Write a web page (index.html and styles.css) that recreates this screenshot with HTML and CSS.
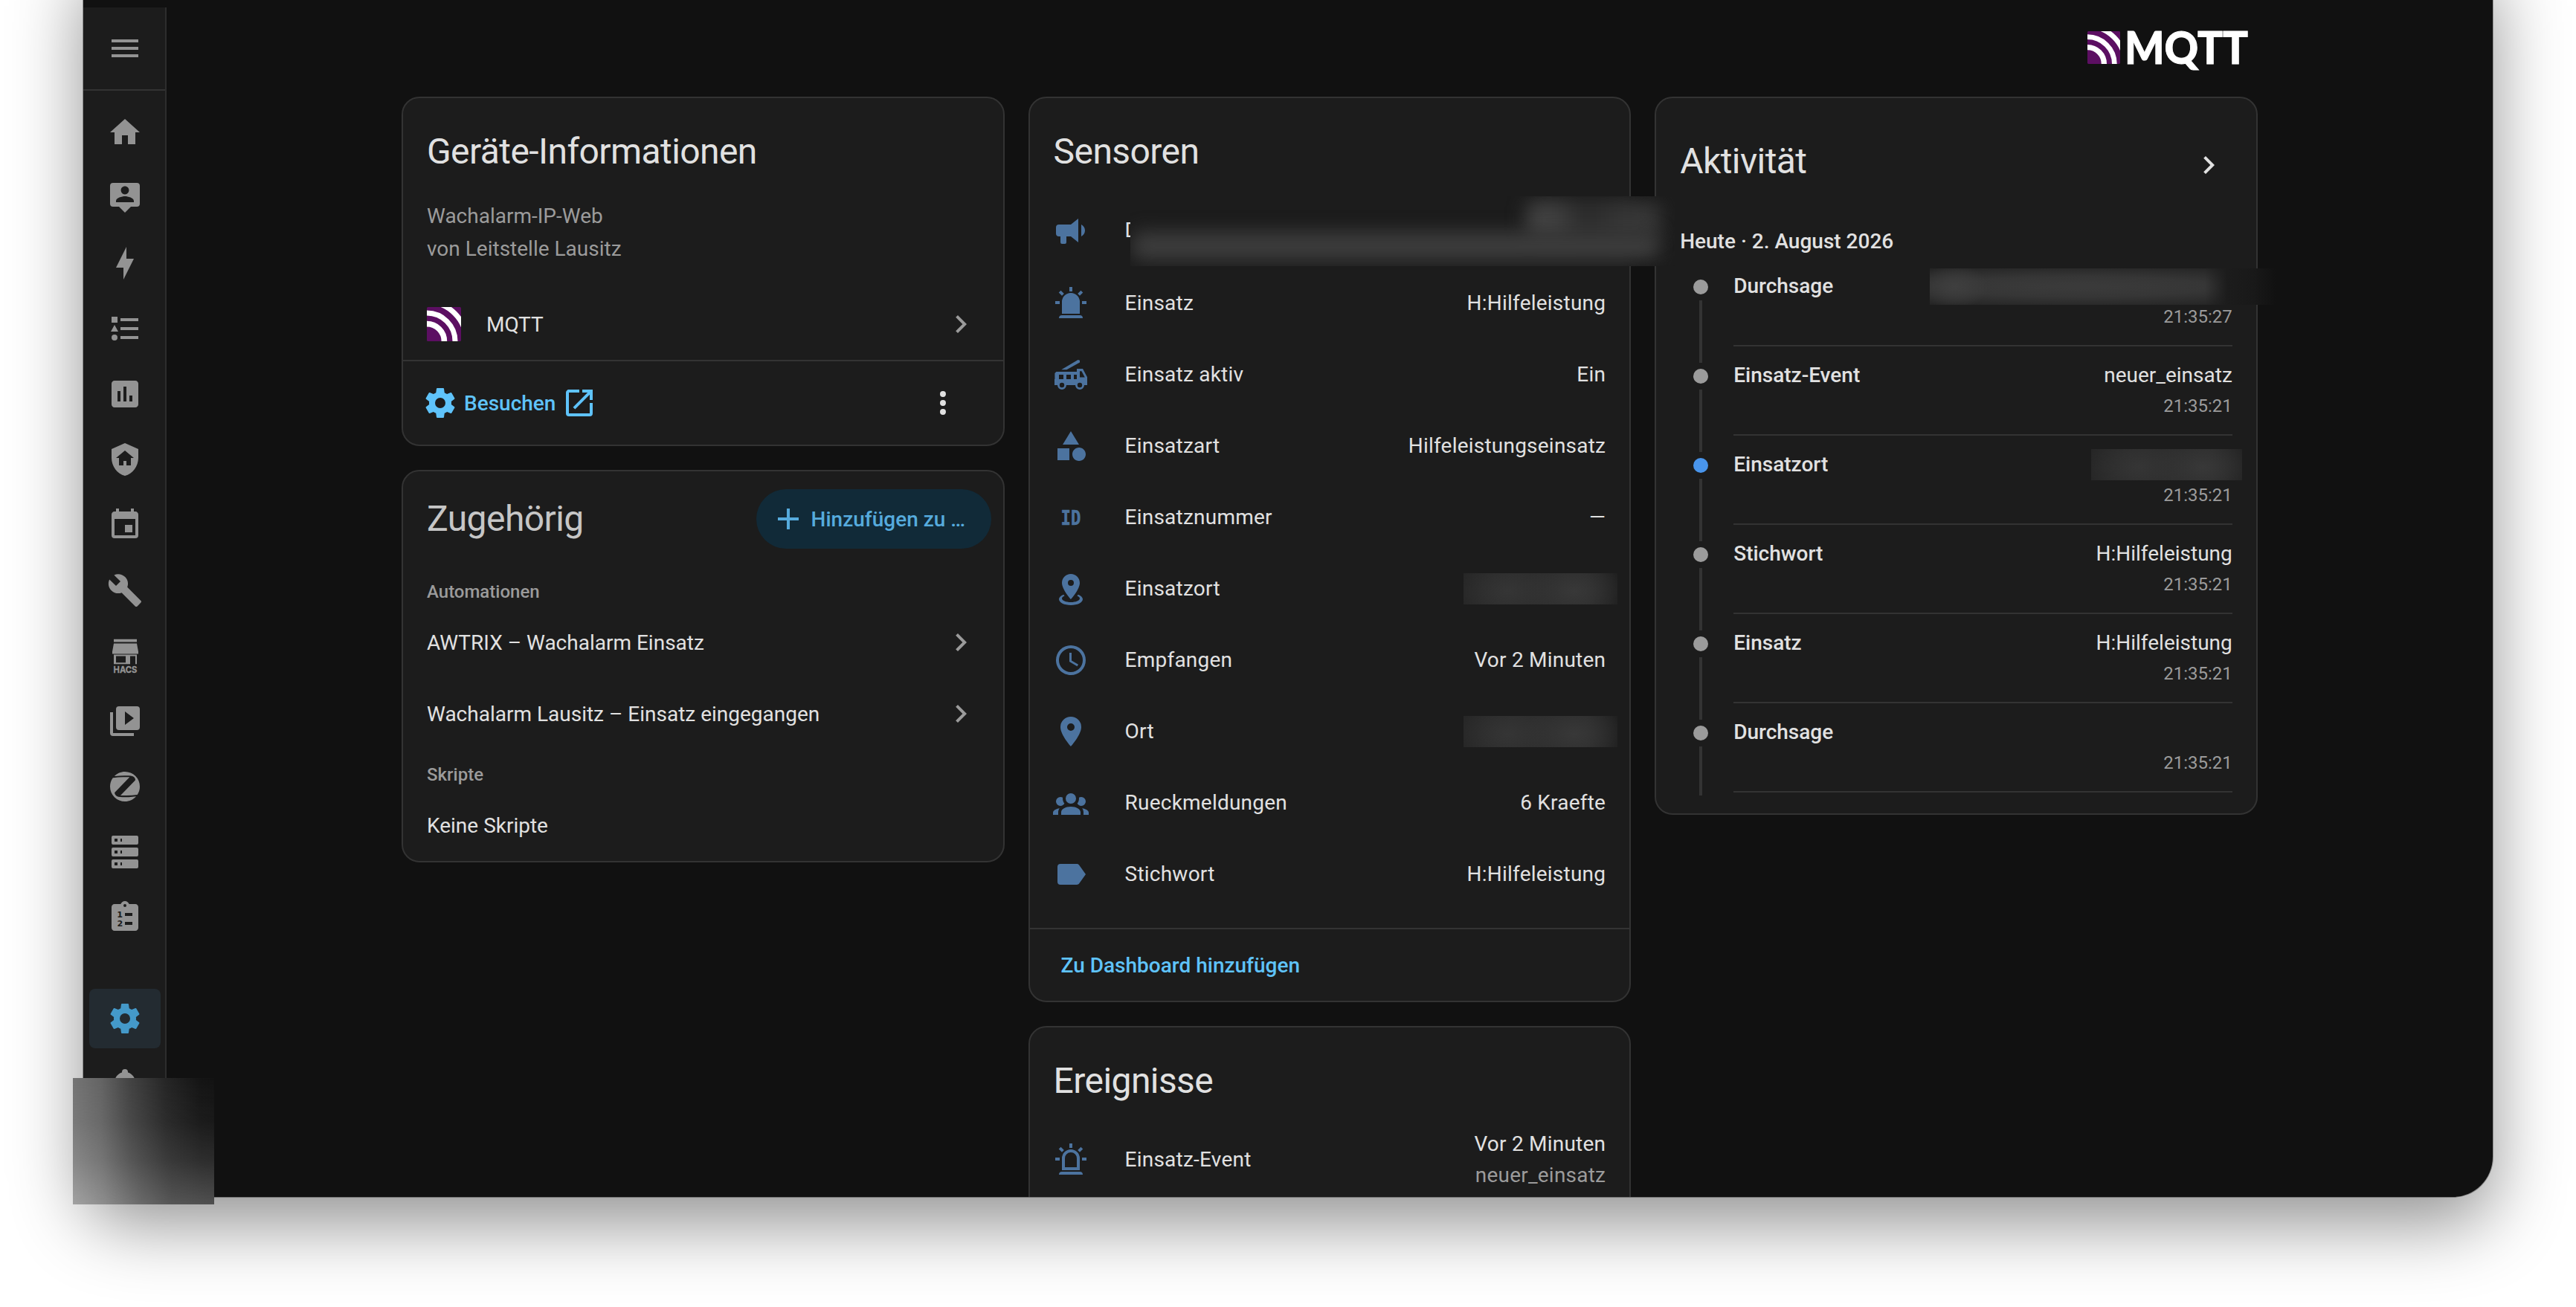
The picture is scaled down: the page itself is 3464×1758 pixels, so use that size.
FILE: index.html
```html
<!DOCTYPE html>
<html lang="de">
<head>
  <meta charset="UTF-8" />
  <meta name="viewport" content="width=device-width, initial-scale=1.0"/>
  <title>Wachalarm-IP-Web</title>
  <link rel="stylesheet" href="styles.css">
</head>
<body>
  <div class="window">
    <nav class="sidebar">
      <div class="menu">
        <svg class="icon" viewBox="0 0 24 24"><path d="M3,6H21V8H3V6M3,11H21V13H3V11M3,16H21V18H3V16Z"/></svg>
      </div>
      <div class="nav-items">
        <a class="nav-item"><svg class="icon" viewBox="0 0 24 24"><path d="M10,20V14H14V20H19V12H22L12,3L2,12H5V20H10Z"/></svg></a>
        <a class="nav-item"><svg class="icon" viewBox="0 0 24 24"><path d="M20,2H4A2,2 0 0,0 2,4V16A2,2 0 0,0 4,18H8L12,22L16,18H20A2,2 0 0,0 22,16V4A2,2 0 0,0 20,2M12,4.3C13.5,4.3 14.7,5.5 14.7,7C14.7,8.5 13.5,9.7 12,9.7C10.5,9.7 9.3,8.5 9.3,7C9.3,5.5 10.5,4.3 12,4.3M18,15H6V14.1C6,12.1 10,11 12,11C14,11 18,12.1 18,14.1V15Z"/></svg></a>
        <a class="nav-item"><svg class="icon" viewBox="0 0 24 24"><path d="M11 15H6L13 1V9H18L11 23V15Z"/></svg></a>
        <a class="nav-item"><svg class="icon" viewBox="0 0 24 24"><path d="M5,9.5L7.5,14H2.5L5,9.5M3,4H7V8H3V4M5,20A2,2 0 0,0 7,18A2,2 0 0,0 5,16A2,2 0 0,0 3,18A2,2 0 0,0 5,20M9,5V7H21V5H9M9,19H21V17H9V19M9,13H21V11H9V13Z"/></svg></a>
        <a class="nav-item"><svg class="icon" viewBox="0 0 24 24"><path fill-rule="evenodd" d="M19 3H5C3.9 3 3 3.9 3 5V19C3 20.1 3.9 21 5 21H19C20.1 21 21 20.1 21 19V5C21 3.9 20.1 3 19 3M9 17H7V10H9V17M13 17H11V7H13V17M17 17H15V13H17V17Z"/></svg></a>
        <a class="nav-item"><svg class="icon" viewBox="0 0 24 24"><path fill-rule="evenodd" d="M11,13H13V16H16V11H18L12,6L6,11H8V16H11V13M12,1L21,5V11C21,16.55 17.16,21.74 12,23C6.84,21.74 3,16.55 3,11V5L12,1Z"/></svg></a>
        <a class="nav-item"><svg class="icon" viewBox="0 0 24 24"><path d="M19,19H5V8H19M16,1V3H8V1H6V3H5C3.89,3 3,3.89 3,5V19A2,2 0 0,0 5,21H19A2,2 0 0,0 21,19V5C21,3.89 20.1,3 19,3H18V1M17,12H12V17H17V12Z"/></svg></a>
        <a class="nav-item"><svg class="icon" viewBox="0 0 24 24"><path d="M22.7,19L13.6,9.9C14.5,7.6 14,4.9 12.1,3C10.1,1 7.1,0.6 4.7,1.7L9,6L6,9L1.6,4.7C0.4,7.1 0.9,10.1 2.9,12.1C4.8,14 7.5,14.5 9.8,13.6L18.9,22.7C19.3,23.1 19.9,23.1 20.3,22.7L22.6,20.4C23.1,20 23.1,19.3 22.7,19Z"/></svg></a>
        <a class="nav-item">
          <svg class="icon" viewBox="0 0 24 24">
            <path fill-rule="evenodd" d="M4.5,0.9H20V2.7H4.5ZM4.5,3.8H20L21,9.2V10.7H3.5V9.2ZM4.5,11.3H20V17.6H19V12.3H15.5V17.6H4.5ZM6,12.3V16.6H12.5V12.3Z"/>
            <text class="hacs" x="4.3" y="23.4" textLength="15.9" lengthAdjust="spacingAndGlyphs">HACS</text>
          </svg>
        </a>
        <a class="nav-item"><svg class="icon" viewBox="0 0 24 24"><path d="M4,6H2V20A2,2 0 0,0 4,22H18V20H4V6M20,2H8A2,2 0 0,0 6,4V16A2,2 0 0,0 8,18H20A2,2 0 0,0 22,16V4A2,2 0 0,0 20,2M12,14.5V5.5L18,10L12,14.5Z"/></svg></a>
        <a class="nav-item"><svg class="icon" viewBox="0 0 24 24"><path d="M4.06,6.15C3.97,6.17 3.88,6.22 3.8,6.28C2.66,7.9 2,9.87 2,12A10,10 0 0,0 12,22C15,22 17.68,20.68 19.5,18.6L17,18.85C14.25,19.15 11.45,19.19 8.66,18.96C7.95,18.94 7.24,18.76 6.59,18.45C5.73,18.06 5.15,17.23 5.07,16.29C5.06,16.13 5.12,16 5.23,15.87L7.42,13.6L15.03,5.7V5.6H10.84C8.57,5.64 6.31,5.82 4.06,6.15M20.17,17.5C20.26,17.47 20.35,17.44 20.43,17.39C21.42,15.83 22,14 22,12A10,10 0 0,0 12,2C9.22,2 6.7,3.13 4.89,4.97H5.17C8.28,4.57 11.43,4.47 14.56,4.65C15.5,4.64 16.45,4.82 17.33,5.17C18.25,5.53 18.89,6.38 19,7.37C19,7.53 18.93,7.7 18.82,7.82L9.71,17.19L9,17.95V18.06H13.14C15.5,18 17.84,17.81 20.17,17.5Z"/></svg></a>
        <a class="nav-item"><svg class="icon" viewBox="0 0 24 24"><path fill-rule="evenodd" d="M4,1H20A1,1 0 0,1 21,2V6A1,1 0 0,1 20,7H4A1,1 0 0,1 3,6V2A1,1 0 0,1 4,1M4,9H20A1,1 0 0,1 21,10V14A1,1 0 0,1 20,15H4A1,1 0 0,1 3,14V10A1,1 0 0,1 4,9M4,17H20A1,1 0 0,1 21,18V22A1,1 0 0,1 20,23H4A1,1 0 0,1 3,22V18A1,1 0 0,1 4,17M9,5H10V3H9V5M9,13H10V11H9V13M9,21H10V19H9V21M5,3V5H7V3H5M5,11V13H7V11H5M5,19V21H7V19H5Z"/></svg></a>
        <a class="nav-item">
          <svg class="icon" viewBox="0 0 24 24">
            <path fill-rule="evenodd" d="M19,3H14.82C14.4,1.84 13.3,1 12,1S9.6,1.84 9.18,3H5C3.9,3 3,3.9 3,5V19C3,20.1 3.9,21 5,21H19C20.1,21 21,20.1 21,19V5C21,3.9 20.1,3 19,3M12,3A1,1 0 0,1 12,5A1,1 0 0,1 12,3M12,9H17V11H12ZM12,15H17V17H12Z"/>
            <text class="digit" x="6.6" y="12.1">1</text>
            <text class="digit" x="6.8" y="18.1">2</text>
          </svg>
        </a>
      </div>
      <div class="nav-bottom">
        <a class="nav-item active"><svg class="icon" viewBox="0 0 24 24"><path d="M12,15.5A3.5,3.5 0 0,1 8.5,12A3.5,3.5 0 0,1 12,8.5A3.5,3.5 0 0,1 15.5,12A3.5,3.5 0 0,1 12,15.5M19.43,12.97C19.47,12.65 19.5,12.33 19.5,12C19.5,11.67 19.47,11.34 19.43,11L21.54,9.37C21.73,9.22 21.78,8.95 21.66,8.73L19.66,5.27C19.54,5.05 19.27,4.96 19.05,5.05L16.56,6.05C16.04,5.66 15.5,5.32 14.87,5.07L14.5,2.42C14.46,2.18 14.25,2 14,2H10C9.75,2 9.54,2.18 9.5,2.42L9.13,5.07C8.5,5.32 7.96,5.66 7.44,6.05L4.95,5.05C4.73,4.96 4.46,5.05 4.34,5.27L2.34,8.73C2.21,8.95 2.27,9.22 2.46,9.37L4.57,11C4.53,11.34 4.5,11.67 4.5,12C4.5,12.33 4.53,12.65 4.57,12.97L2.46,14.63C2.27,14.78 2.21,15.05 2.34,15.27L4.34,18.73C4.46,18.95 4.73,19.03 4.95,18.95L7.44,17.94C7.96,18.34 8.5,18.68 9.13,18.93L9.5,21.58C9.54,21.82 9.75,22 10,22H14C14.25,22 14.46,21.82 14.5,21.58L14.87,18.93C15.5,18.67 16.04,18.34 16.56,17.94L19.05,18.95C19.27,19.03 19.54,18.95 19.66,18.73L21.66,15.27C21.78,15.05 21.73,14.78 21.54,14.63L19.43,12.97Z"/></svg></a>
        <a class="nav-item"><svg class="icon" viewBox="0 0 24 24"><path d="M21,19V20H3V19L5,17V11C5,7.9 7.03,5.17 10,4.29C10,4.19 10,4.1 10,4A2,2 0 0,1 12,2A2,2 0 0,1 14,4C14,4.1 14,4.19 14,4.29C16.97,5.17 19,7.9 19,11V17L21,19Z"/></svg></a>
      </div>
    </nav>

    <main class="content">
      <div class="brand">
        <svg class="brand-mark" viewBox="0 0 46 46"><rect width="46" height="46" rx="1.5" fill="#5c0f62"/><g fill="none" stroke="#fff"><circle cx="0" cy="46" r="23.4" stroke-width="7.6"/><circle cx="0" cy="46" r="38" stroke-width="7"/><circle cx="0" cy="46" r="53" stroke-width="7"/></g></svg>
        <svg class="brand-name" viewBox="0 0 172 72"><text x="1" y="50" textLength="166" lengthAdjust="spacingAndGlyphs">MQTT</text></svg>
      </div>

      <div class="columns">
        <div class="column">
          <section class="card">
            <h1 class="card-title">Geräte-Informationen</h1>
            <div class="device">
              <div>Wachalarm-IP-Web</div>
              <div>von Leitstelle Lausitz</div>
            </div>
            <div class="link-row integration">
              <svg class="mqtt" viewBox="0 0 46 46"><rect width="46" height="46" rx="1.5" fill="#5c0f62"/><g fill="none" stroke="#fff"><circle cx="0" cy="46" r="23.4" stroke-width="7.6"/><circle cx="0" cy="46" r="38" stroke-width="7"/><circle cx="0" cy="46" r="53" stroke-width="7"/></g></svg>
              <span class="label">MQTT</span>
              <svg class="icon" viewBox="0 0 24 24"><path d="M8.59,16.58L13.17,12L8.59,7.41L10,6L16,12L10,18L8.59,16.58Z"/></svg>
            </div>
            <div class="actions">
              <a class="visit">
                <svg class="icon" viewBox="0 0 24 24"><path d="M12,15.5A3.5,3.5 0 0,1 8.5,12A3.5,3.5 0 0,1 12,8.5A3.5,3.5 0 0,1 15.5,12A3.5,3.5 0 0,1 12,15.5M19.43,12.97C19.47,12.65 19.5,12.33 19.5,12C19.5,11.67 19.47,11.34 19.43,11L21.54,9.37C21.73,9.22 21.78,8.95 21.66,8.73L19.66,5.27C19.54,5.05 19.27,4.96 19.05,5.05L16.56,6.05C16.04,5.66 15.5,5.32 14.87,5.07L14.5,2.42C14.46,2.18 14.25,2 14,2H10C9.75,2 9.54,2.18 9.5,2.42L9.13,5.07C8.5,5.32 7.96,5.66 7.44,6.05L4.95,5.05C4.73,4.96 4.46,5.05 4.34,5.27L2.34,8.73C2.21,8.95 2.27,9.22 2.46,9.37L4.57,11C4.53,11.34 4.5,11.67 4.5,12C4.5,12.33 4.53,12.65 4.57,12.97L2.46,14.63C2.27,14.78 2.21,15.05 2.34,15.27L4.34,18.73C4.46,18.95 4.73,19.03 4.95,18.95L7.44,17.94C7.96,18.34 8.5,18.68 9.13,18.93L9.5,21.58C9.54,21.82 9.75,22 10,22H14C14.25,22 14.46,21.82 14.5,21.58L14.87,18.93C15.5,18.67 16.04,18.34 16.56,17.94L19.05,18.95C19.27,19.03 19.54,18.95 19.66,18.73L21.66,15.27C21.78,15.05 21.73,14.78 21.54,14.63L19.43,12.97Z"/></svg>
                <span class="visit-label">Besuchen</span>
                <svg class="icon" viewBox="0 0 24 24"><path d="M14,3V5H17.59L7.76,14.83L9.17,16.24L19,6.41V10H21V3M19,19H5V5H12V3H5C3.89,3 3,3.9 3,5V19A2,2 0 0,0 5,21H19A2,2 0 0,0 21,19V12H19V19Z"/></svg>
              </a>
              <svg class="icon more" viewBox="0 0 24 24"><path d="M12,16A2,2 0 0,1 14,18A2,2 0 0,1 12,20A2,2 0 0,1 10,18A2,2 0 0,1 12,16M12,10A2,2 0 0,1 14,12A2,2 0 0,1 12,14A2,2 0 0,1 10,12A2,2 0 0,1 12,10M12,4A2,2 0 0,1 14,6A2,2 0 0,1 12,8A2,2 0 0,1 10,6A2,2 0 0,1 12,4Z"/></svg>
            </div>
          </section>

          <section class="card">
            <div class="related-head">
              <h1>Zugehörig</h1>
              <button class="add">
                <svg class="icon" viewBox="0 0 24 24"><path d="M19,13H13V19H11V13H5V11H11V5H13V11H19V13Z"/></svg>
                Hinzufügen zu …
              </button>
            </div>
            <h3>Automationen</h3>
            <div class="link-row">
              <span class="label">AWTRIX – Wachalarm Einsatz</span>
              <svg class="icon" viewBox="0 0 24 24"><path d="M8.59,16.58L13.17,12L8.59,7.41L10,6L16,12L10,18L8.59,16.58Z"/></svg>
            </div>
            <div class="link-row">
              <span class="label">Wachalarm Lausitz – Einsatz eingegangen</span>
              <svg class="icon" viewBox="0 0 24 24"><path d="M8.59,16.58L13.17,12L8.59,7.41L10,6L16,12L10,18L8.59,16.58Z"/></svg>
            </div>
            <h3>Skripte</h3>
            <div class="link-row"><span class="label">Keine Skripte</span></div>
          </section>
        </div>

        <div class="column">
          <section class="card">
            <h1 class="card-title">Sensoren</h1>
            <div class="entities">
              <div class="entity tall">
                <svg class="icon" viewBox="0 0 24 24"><path d="M12,8H4A2,2 0 0,0 2,10V14A2,2 0 0,0 4,16H5V20A1,1 0 0,0 6,21H8A1,1 0 0,0 9,20V16H12L17,20V4L12,8M21.5,12C21.5,13.71 20.54,15.26 19,16V8C20.53,8.75 21.5,10.3 21.5,12Z"/></svg>
                <span class="name">D</span>
                <div class="redacted redacted-wide"><i class="smear smear-top"></i><i class="smear smear-line"></i></div>
              </div>
              <div class="entity">
                <svg class="icon" viewBox="0 0 24 24"><path d="M6,6.9L3.87,4.78L5.28,3.37L7.4,5.5L6,6.9M13,1V4H11V1H13M20.13,4.78L18,6.9L16.6,5.5L18.72,3.37L20.13,4.78M4.5,10.5V12.5H1.5V10.5H4.5M19.5,10.5H22.5V12.5H19.5V10.5M6,20H18A2,2 0 0,1 20,22H4A2,2 0 0,1 6,20M12,5A6,6 0 0,1 18,11V19H6V11A6,6 0 0,1 12,5Z"/></svg>
                <span class="name">Einsatz</span><span>H:Hilfeleistung</span>
              </div>
              <div class="entity">
                <svg class="icon" viewBox="0 0 24 24"><path fill-rule="evenodd" d="M5.6,8.6L16.8,2L18,2.4V3.8L9.2,8.6ZM1.2,15V11L2.2,10H16V8H20L23,13.6V19H21A3,3 0 0,1 15,19H9A3,3 0 0,1 3,19H1V15ZM4,12V15H7V12ZM9,12V15H12V12ZM14,12V15H16V12ZM18,9.6V13.7H21.4L19.2,9.6ZM6,17.4A1.6,1.6 0 0,0 6,20.6A1.6,1.6 0 0,0 6,17.4ZM18,17.4A1.6,1.6 0 0,0 18,20.6A1.6,1.6 0 0,0 18,17.4Z"/></svg>
                <span class="name">Einsatz aktiv</span><span>Ein</span>
              </div>
              <div class="entity">
                <svg class="icon" viewBox="0 0 24 24"><path d="M11,13.5V21.5H3V13.5H11M12,2L17.5,11H6.5L12,2M17.5,13C20,13 22,15 22,17.5C22,20 20,22 17.5,22C15,22 13,20 13,17.5C13,15 15,13 17.5,13Z"/></svg>
                <span class="name">Einsatzart</span><span>Hilfeleistungseinsatz</span>
              </div>
              <div class="entity">
                <svg class="icon" viewBox="0 0 24 24"><text class="id" x="5.3" y="16.9" textLength="13.4" lengthAdjust="spacingAndGlyphs">ID</text></svg>
                <span class="name">Einsatznummer</span><span>—</span>
              </div>
              <div class="entity">
                <svg class="icon" viewBox="0 0 24 24"><path d="M12,2C15.31,2 18,4.66 18,7.95C18,12.41 12,19 12,19C12,19 6,12.41 6,7.95C6,4.66 8.69,2 12,2M12,6A2,2 0 0,0 10,8A2,2 0 0,0 12,10A2,2 0 0,0 14,8A2,2 0 0,0 12,6M20,19C20,21.21 16.42,23 12,23C7.58,23 4,21.21 4,19C4,17.71 5.22,16.56 7.11,15.83L7.75,16.74C6.67,17.19 6,17.81 6,18.5C6,19.88 8.69,21 12,21C15.31,21 18,19.88 18,18.5C18,17.81 17.33,17.19 16.25,16.74L16.89,15.83C18.78,16.56 20,17.71 20,19Z"/></svg>
                <span class="name">Einsatzort</span><div class="redacted redacted-value"></div>
              </div>
              <div class="entity">
                <svg class="icon" viewBox="0 0 24 24"><path d="M12,20A8,8 0 0,0 20,12A8,8 0 0,0 12,4A8,8 0 0,0 4,12A8,8 0 0,0 12,20M12,2A10,10 0 0,1 22,12A10,10 0 0,1 12,22C6.47,22 2,17.5 2,12A10,10 0 0,1 12,2M12.5,7V12.25L17,14.92L16.25,16.15L11,13V7H12.5Z"/></svg>
                <span class="name">Empfangen</span><span>Vor 2 Minuten</span>
              </div>
              <div class="entity">
                <svg class="icon" viewBox="0 0 24 24"><path d="M12,11.5A2.5,2.5 0 0,1 9.5,9A2.5,2.5 0 0,1 12,6.5A2.5,2.5 0 0,1 14.5,9A2.5,2.5 0 0,1 12,11.5M12,2A7,7 0 0,0 5,9C5,14.25 12,22 12,22C12,22 19,14.25 19,9A7,7 0 0,0 12,2Z"/></svg>
                <span class="name">Ort</span><div class="redacted redacted-value"></div>
              </div>
              <div class="entity">
                <svg class="icon" viewBox="0 0 24 24"><path d="M12,5.5A3.5,3.5 0 0,1 15.5,9A3.5,3.5 0 0,1 12,12.5A3.5,3.5 0 0,1 8.5,9A3.5,3.5 0 0,1 12,5.5M5,8C5.56,8 6.08,8.15 6.53,8.42C6.38,9.85 6.8,11.27 7.66,12.38C7.16,13.34 6.16,14 5,14A3,3 0 0,1 2,11A3,3 0 0,1 5,8M19,8A3,3 0 0,1 22,11A3,3 0 0,1 19,14C17.84,14 16.84,13.34 16.34,12.38C17.2,11.27 17.62,9.85 17.47,8.42C17.92,8.15 18.44,8 19,8M5.5,18.25C5.5,16.18 8.41,14.5 12,14.5C15.59,14.5 18.5,16.18 18.5,18.25V20H5.5V18.25M0,20V18.5C0,17.11 1.89,15.94 4.45,15.6C3.86,16.28 3.5,17.22 3.5,18.25V20H0M24,20H20.5V18.25C20.5,17.22 20.14,16.28 19.55,15.6C22.11,15.94 24,17.11 24,18.5V20Z"/></svg>
                <span class="name">Rueckmeldungen</span><span>6 Kraefte</span>
              </div>
              <div class="entity">
                <svg class="icon" viewBox="0 0 24 24"><path d="M17.63,5.84C17.27,5.33 16.67,5 16,5H5A2,2 0 0,0 3,7V17A2,2 0 0,0 5,19H16C16.67,19 17.27,18.66 17.63,18.15L22,12L17.63,5.84Z"/></svg>
                <span class="name">Stichwort</span><span>H:Hilfeleistung</span>
              </div>
            </div>
            <div class="dashboard-link">Zu Dashboard hinzufügen</div>
          </section>

          <section class="card">
            <h1 class="card-title">Ereignisse</h1>
            <div class="entities">
              <div class="entity tall">
                <svg class="icon" viewBox="0 0 24 24"><path d="M6,6.9L3.87,4.78L5.28,3.37L7.4,5.5L6,6.9M13,1V4H11V1H13M20.13,4.78L18,6.9L16.6,5.5L18.72,3.37L20.13,4.78M4.5,10.5V12.5H1.5V10.5H4.5M19.5,10.5H22.5V12.5H19.5V10.5M6,20H18A2,2 0 0,1 20,22H4A2,2 0 0,1 6,20M12,5A6,6 0 0,1 18,11V19H6V11A6,6 0 0,1 12,5M12,7A4,4 0 0,0 8,11V17H16V11A4,4 0 0,0 12,7Z"/></svg>
                <span class="name">Einsatz-Event</span>
                <div class="two-line">
                  <div>Vor 2 Minuten</div>
                  <div class="secondary">neuer_einsatz</div>
                </div>
              </div>
            </div>
          </section>
        </div>

        <div class="column">
          <section class="card">
            <div class="activity-head">
              <h1>Aktivität</h1>
              <svg class="icon" viewBox="0 0 24 24"><path d="M8.59,16.58L13.17,12L8.59,7.41L10,6L16,12L10,18L8.59,16.58Z"/></svg>
            </div>
            <div class="date">Heute · 2. August 2026</div>
            <div class="timeline">
              <div class="entry">
                <div class="rail"><span class="dot"></span></div>
                <div class="entry-body">
                  <div class="entry-line"><b>Durchsage</b><div class="redacted redacted-message"></div></div>
                  <div class="time">21:35:27</div>
                </div>
              </div>
              <div class="entry">
                <div class="rail"><span class="dot"></span></div>
                <div class="entry-body">
                  <div class="entry-line"><b>Einsatz-Event</b><span>neuer_einsatz</span></div>
                  <div class="time">21:35:21</div>
                </div>
              </div>
              <div class="entry">
                <div class="rail"><span class="dot blue"></span></div>
                <div class="entry-body">
                  <div class="entry-line"><b>Einsatzort</b><div class="redacted redacted-place"></div></div>
                  <div class="time">21:35:21</div>
                </div>
              </div>
              <div class="entry">
                <div class="rail"><span class="dot"></span></div>
                <div class="entry-body">
                  <div class="entry-line"><b>Stichwort</b><span>H:Hilfeleistung</span></div>
                  <div class="time">21:35:21</div>
                </div>
              </div>
              <div class="entry">
                <div class="rail"><span class="dot"></span></div>
                <div class="entry-body">
                  <div class="entry-line"><b>Einsatz</b><span>H:Hilfeleistung</span></div>
                  <div class="time">21:35:21</div>
                </div>
              </div>
              <div class="entry">
                <div class="rail"><span class="dot"></span></div>
                <div class="entry-body">
                  <div class="entry-line"><b>Durchsage</b></div>
                  <div class="time">21:35:21</div>
                </div>
              </div>
            </div>
          </section>
        </div>
      </div>
    </main>
  </div>

  <div class="user-cover"></div>
</body>
</html>
```
FILE: styles.css
```css
* {
  box-sizing: border-box;
}
body {
  margin: 0;
  height: 1758px;
  overflow: hidden;
  background: #fff;
  color: #e1e1e1;
  font-family: Roboto, "Liberation Sans", sans-serif;
  font-size: 28px;
  line-height: 44px;
}
h1, h3 {
  margin: 0;
  font-weight: 400;
}
h1 {
  font-size: 48px;
  line-height: 96px;
  letter-spacing: -0.012em;
}
.icon {
  display: block;
  flex: none;
  width: 48px;
  height: 48px;
  fill: currentColor;
  overflow: visible;
}

/* window, its top edge is above the viewport */
.window {
  display: flex;
  width: 3240px;
  height: 1670px;
  margin: -60px 0 0 112px;
  overflow: hidden;
  background: #111;
  border-radius: 0 0 54px 54px;
  box-shadow: 0 0 0 1px rgba(0, 0, 0, 0.3), 0 36px 96px rgba(0, 0, 0, 0.43);
}

/* sidebar */
.sidebar {
  flex: none;
  width: 112px;
  margin-top: 70px;
  background: #1c1c1c;
  border-right: 2px solid #2d2d2d;
  color: #939393;
}
.menu {
  display: flex;
  align-items: center;
  height: 112px;
  padding-left: 32px;
  border-bottom: 2px solid #333;
}
.nav-items, .nav-bottom {
  display: flex;
  flex-direction: column;
  gap: 8px;
  padding: 16px 0 0 8px;
}
.nav-bottom {
  padding-top: 56px;
}
.nav-item {
  display: flex;
  align-items: center;
  justify-content: center;
  width: 96px;
  height: 80px;
  border-radius: 8px;
}
.nav-item.active {
  background: #232b31;
  color: #4499c9;
}
.hacs {
  font: 700 6.2px Inter, sans-serif;
  stroke: currentColor;
  stroke-width: 0.15px;
}
.digit {
  font: 700 5.6px "DejaVu Sans", sans-serif;
  fill: #1c1c1c;
}

/* content */
.content {
  flex: 1;
  padding: 60px 0 0 316px;
}
.brand {
  display: flex;
  justify-content: flex-end;
  gap: 5px;
  width: 2488px;
  height: 130px;
  padding-top: 36px;
}
.brand-mark {
  width: 44px;
  height: 44px;
  margin-top: 6px;
}
.brand-name {
  width: 172px;
  height: 72px;
  overflow: visible;
}
.brand-name text {
  font: 900 61px Lato, sans-serif;
  fill: #fff;
  stroke: #fff;
  stroke-width: 1px;
}
.columns {
  display: flex;
  align-items: flex-start;
  gap: 32px;
}
.column {
  display: flex;
  flex-direction: column;
  gap: 32px;
  width: 810.6px;
}
.card {
  background: #1c1c1c;
  border: 2px solid #333;
  border-radius: 24px;
}
.card-title {
  padding: 24px 32px 16px;
}

/* device info */
.device {
  padding: 1px 32px 31px;
  color: #9b9b9b;
}
.link-row {
  display: flex;
  align-items: center;
  height: 96px;
  padding: 0 33px 0 32px;
}
.link-row .icon {
  color: #9b9b9b;
}
.link-row .label {
  flex: 1;
  padding-top: 2px;
}
.link-row.integration .label {
  padding-top: 1px;
}
.mqtt {
  width: 46px;
  height: 46px;
  margin-right: 34px;
}
.actions {
  display: flex;
  align-items: center;
  justify-content: space-between;
  height: 114px;
  padding: 0 57px 0 26px;
  border-top: 2px solid #333;
}
.visit {
  display: flex;
  align-items: center;
  gap: 8px;
  color: #5fc3fa;
  font-weight: 500;
}
.visit-label {
  padding-top: 2px;
}

/* related */
.related-head {
  display: flex;
  align-items: center;
  justify-content: space-between;
  height: 128px;
  padding: 0 16px 0 32px;
  color: #c6c6c6;
}
.add {
  display: flex;
  align-items: center;
  gap: 7px;
  width: 316px;
  height: 80px;
  padding: 0 0 0 19px;
  border: none;
  border-radius: 40px;
  background: #112a38;
  color: #56abdd;
  font: 500 28px Roboto, sans-serif;
  white-space: nowrap;
}
h3 {
  margin-top: 14px;
  padding: 0 32px;
  color: #9b9b9b;
  font-size: 24px;
  font-weight: 500;
  line-height: 40px;
}

/* sensors */
.entities {
  display: flex;
  flex-direction: column;
  gap: 16px;
  padding: 0 32px 32px 31px;
  letter-spacing: 0.22px;
}
.entity {
  position: relative;
  display: flex;
  align-items: center;
  height: 80px;
}
.entity.tall {
  height: 84px;
}
.entity .icon {
  margin-right: 49px;
  color: #4c739f;
}
.entity .name {
  flex: 1;
}
.id {
  font: 700 13.4px "DejaVu Sans Mono", monospace;
  letter-spacing: 0;
  stroke: currentColor;
  stroke-width: 0.3px;
}
.two-line {
  line-height: 42px;
  text-align: right;
}
.secondary {
  color: #9b9b9b;
}
.dashboard-link {
  height: 98px;
  padding: 1px 0 0 42px;
  border-top: 2px solid #333;
  color: #5fc3fa;
  font-weight: 500;
  line-height: 96px;
}

/* activity */
.activity-head {
  display: flex;
  align-items: center;
  justify-content: space-between;
  height: 170px;
  padding: 0 40px 0 32px;
}
.activity-head .icon {
  margin-top: 10px;
}
.date {
  height: 44px;
  padding: 1px 0 0 32px;
  font-weight: 500;
}
.timeline {
  padding-bottom: 28px;
}
.entry {
  display: flex;
  gap: 34px;
  height: 120px;
  padding: 0 32px 0 50px;
}
.rail {
  display: flex;
  flex-direction: column;
  align-items: center;
  gap: 8px;
  width: 20px;
}
.rail::before, .rail::after {
  content: "";
  width: 4px;
  height: 22px;
  background: #333;
}
.rail::after {
  height: auto;
  flex: 1;
}
.entry:first-child .rail::before {
  background: none;
}
.entry:last-child .rail {
  margin-bottom: -4px;
}
.dot {
  width: 20px;
  height: 20px;
  border-radius: 50%;
  background: #9b9b9b;
}
.dot.blue {
  background: #4995ec;
}
.entry-body {
  flex: 1;
  padding-top: 17px;
  border-bottom: 2px solid #333;
}
.entry-line {
  position: relative;
  display: flex;
  justify-content: space-between;
}
.entry-line b {
  font-weight: 500;
}
.time {
  margin-top: 1px;
  color: #9b9b9b;
  font-size: 24px;
  line-height: 36px;
  text-align: right;
}

/* blurred-out values, laid over the rows */
.redacted {
  position: absolute;
  z-index: 1;
  overflow: hidden;
}
.redacted-wide {
  top: -4px;
  left: 104px;
  width: 732px;
  height: 94px;
  background: linear-gradient(to right, #1c1c1c 660px, #171717 688px, #1a1a1a 710px, #1c1c1c 728px);
}
.smear {
  position: absolute;
  border-radius: 14px;
  background: #3d3d3d;
  filter: blur(12px);
}
.smear-top {
  top: 6px;
  left: 532px;
  width: 182px;
  height: 50px;
  background: linear-gradient(to right, #414141, #414141 22%, #2c2c2c 42%, #373737 75%, #363636);
}
.smear-line {
  top: 48px;
  left: 2px;
  width: 710px;
  height: 38px;
}
.redacted-value {
  top: 19px;
  right: -16px;
  width: 207px;
  height: 42px;
  background:
    radial-gradient(ellipse 70px 44px at 29% 58%, #353535, transparent),
    radial-gradient(ellipse 70px 44px at 72% 58%, #383838, transparent),
    linear-gradient(to right, #262626, #2b2b2b 30%, #2b2b2b 80%, #1f1f1f);
}
.redacted-message {
  top: -2px;
  left: 264px;
  width: 469px;
  height: 49px;
  background:
    linear-gradient(to right, transparent 370px, #1c1c1c 400px, #191919 435px, #111 465px),
    radial-gradient(ellipse 44px 30px at 34px 50%, #3f3f3f, transparent),
    radial-gradient(ellipse 400px 30px at 200px 50%, #3a3a3a 10%, #363636 45%, transparent),
    #232323;
}
.redacted-place {
  top: 1px;
  right: -13px;
  width: 203px;
  height: 42px;
  background:
    radial-gradient(ellipse 70px 44px at 31% 58%, #353535, transparent),
    radial-gradient(ellipse 70px 44px at 74% 58%, #383838, transparent),
    linear-gradient(to right, #262626, #2b2b2b 30%, #2b2b2b 80%, #222);
}

/* cover over the user badge in the lower left corner */
.user-cover {
  position: absolute;
  top: 1450px;
  left: 98px;
  width: 190px;
  height: 170px;
  background: linear-gradient(to right, #757575, #646464 20%, #444 40%, #262626 66%, #151515 90%, #131313);
}
.user-cover::after {
  content: "";
  display: block;
  height: 100%;
  background: linear-gradient(to right, #a2a2a2, #8c8c8c 22%, #6a6a6a 48%, #565656 70%, #4f4f4f);
  -webkit-mask-image: linear-gradient(to bottom, transparent, rgba(0, 0, 0, 0.12) 35%, rgba(0, 0, 0, 0.42) 65%, #000);
  mask-image: linear-gradient(to bottom, transparent, rgba(0, 0, 0, 0.12) 35%, rgba(0, 0, 0, 0.42) 65%, #000);
}
```
